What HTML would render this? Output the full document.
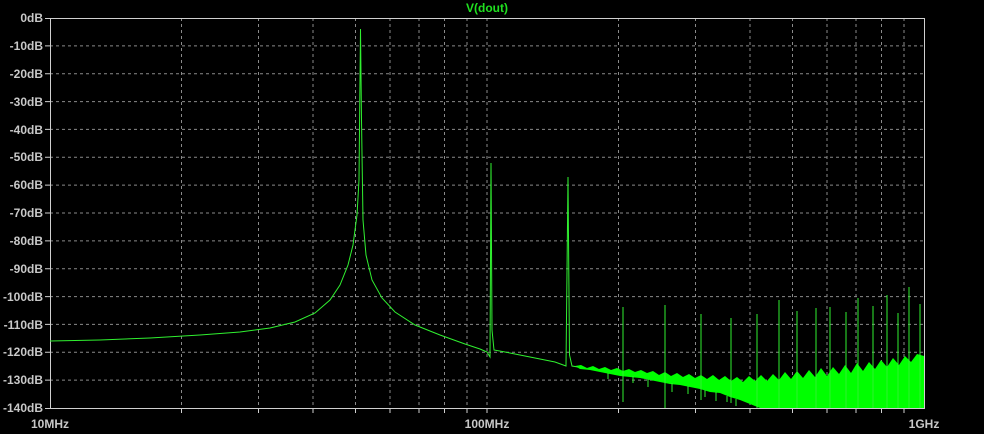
<!DOCTYPE html>
<html><head><meta charset="utf-8"><style>
html,body{margin:0;padding:0;background:#000;width:984px;height:434px;overflow:hidden}
svg{display:block}
text{font-family:"Liberation Sans",Arial,sans-serif;font-weight:bold;font-size:12px;fill:#c8c8c8}
</style></head><body>
<svg width="984" height="434" viewBox="0 0 984 434" xmlns="http://www.w3.org/2000/svg">
<rect width="984" height="434" fill="#000"/>
<g stroke="#8a8a8a" stroke-width="1" stroke-dasharray="3,3" fill="none">
<path d="M50 45.9H924M50 73.7H924M50 101.6H924M50 129.4H924M50 157.3H924M50 185.1H924M50 213H924M50 240.9H924M50 268.7H924M50 296.6H924M50 324.4H924M50 352.3H924M50 380.1H924"/>
<path d="M181.5 18V408M258.5 18V408M313 18V408M355.5 18V408M390 18V408M419 18V408M444.5 18V408M467 18V408M487 18V408M618.5 18V408M695.5 18V408M750 18V408M792.5 18V408M827 18V408M856 18V408M881.5 18V408M904 18V408"/>
</g>
<g stroke="#d0d0d0" stroke-width="1" fill="none">
<path d="M50.5 18V408.5H924.5V18M50 18.5H924"/>
<path d="M45 18.5h5M45 45.9h5M45 73.7h5M45 101.6h5M45 129.4h5M45 157.3h5M45 185.1h5M45 213h5M45 240.9h5M45 268.7h5M45 296.6h5M45 324.4h5M45 352.3h5M45 380.1h5M45 408.5h5"/>
<path d="M181.5 408v5M258.5 408v5M313 408v5M355.5 408v5M390 408v5M419 408v5M444.5 408v5M467 408v5M487 408v5M618.5 408v5M695.5 408v5M750 408v5M792.5 408v5M827 408v5M856 408v5M881.5 408v5M904 408v5"/>
</g>
<g text-anchor="end">
<text x="43" y="22">0dB</text><text x="43" y="50">-10dB</text><text x="43" y="78">-20dB</text><text x="43" y="106">-30dB</text><text x="43" y="134">-40dB</text><text x="43" y="161">-50dB</text><text x="43" y="189">-60dB</text><text x="43" y="217">-70dB</text><text x="43" y="245">-80dB</text><text x="43" y="273">-90dB</text><text x="43" y="301">-100dB</text><text x="43" y="329">-110dB</text><text x="43" y="356">-120dB</text><text x="43" y="384">-130dB</text><text x="43" y="412">-140dB</text>
</g>
<g text-anchor="middle">
<text x="50" y="428">10MHz</text><text x="487" y="428">100MHz</text><text x="924" y="428">1GHz</text>
</g>
<text x="487" y="12" text-anchor="middle" style="fill:#20e020;font-size:12px">V(dout)</text>
<path fill="#00ff00" d="M575 366 L581 365 L587 368 L593 366 L599 369 L605 367 L611 370 L617 368 L623 371 L629 369 L635 372 L641 370 L647 373 L653 371 L659 375 L665 372 L671 376 L677 373 L683 377 L689 374 L695 378 L701 375 L707 379 L713 375 L719 380 L725 376 L731 381 L737 377 L743 382 L749 376 L755 381 L761 375 L767 381 L773 374 L779 380 L785 372 L791 379 L797 371 L803 378 L809 370 L815 377 L821 368 L827 376 L833 367 L839 374 L845 365 L851 373 L857 363 L863 371 L869 362 L875 369 L881 360 L887 367 L893 358 L899 365 L905 356 L911 362 L917 354 L924 356 L924 408 L760 408 L750 404 L740 400 L730 397 L720 393 L710 392 L700 389 L690 387 L680 385 L670 384 L660 382 L650 380 L640 378 L630 377 L620 376 L610 374 L600 372 L590 370 L580 369 Z"/>
<g stroke="#30f030" stroke-width="1" fill="none">
<path d="M50 341 L100 340 L150 338 L200 335 L240 332 L270 328 L295 322 L315 313 L330 300 L340 285 L348 265 L353 245 L357 215 L359 180 L360.5 29 L361.5 120 L363 220 L366 255 L372 280 L382 298 L395 312 L415 325 L440 335 L465 344 L480 349 L487 352 L490 357 L491 163 L492 330 L494 350 L505 352 L530 357 L555 362 L566 366 L568 177 L569.5 355 L572 366 L578 367"/>
<path d="M623 307V402M665 305V408M701 314V400M731 318V403M757 314V408M779 300V408M797 311V408M816 308V408M830 307V408M846 312V408M858 298V408M873 306V408M887 295V408M898 313V408M909 287V408M920 304V408"/>
<path d="M608 373v6M633 376v7M648 379v8M672 383v9M688 386v8M705 390v7M716 392v9M727 396v6M736 399v7"/>
</g>
</svg>
</body></html>
